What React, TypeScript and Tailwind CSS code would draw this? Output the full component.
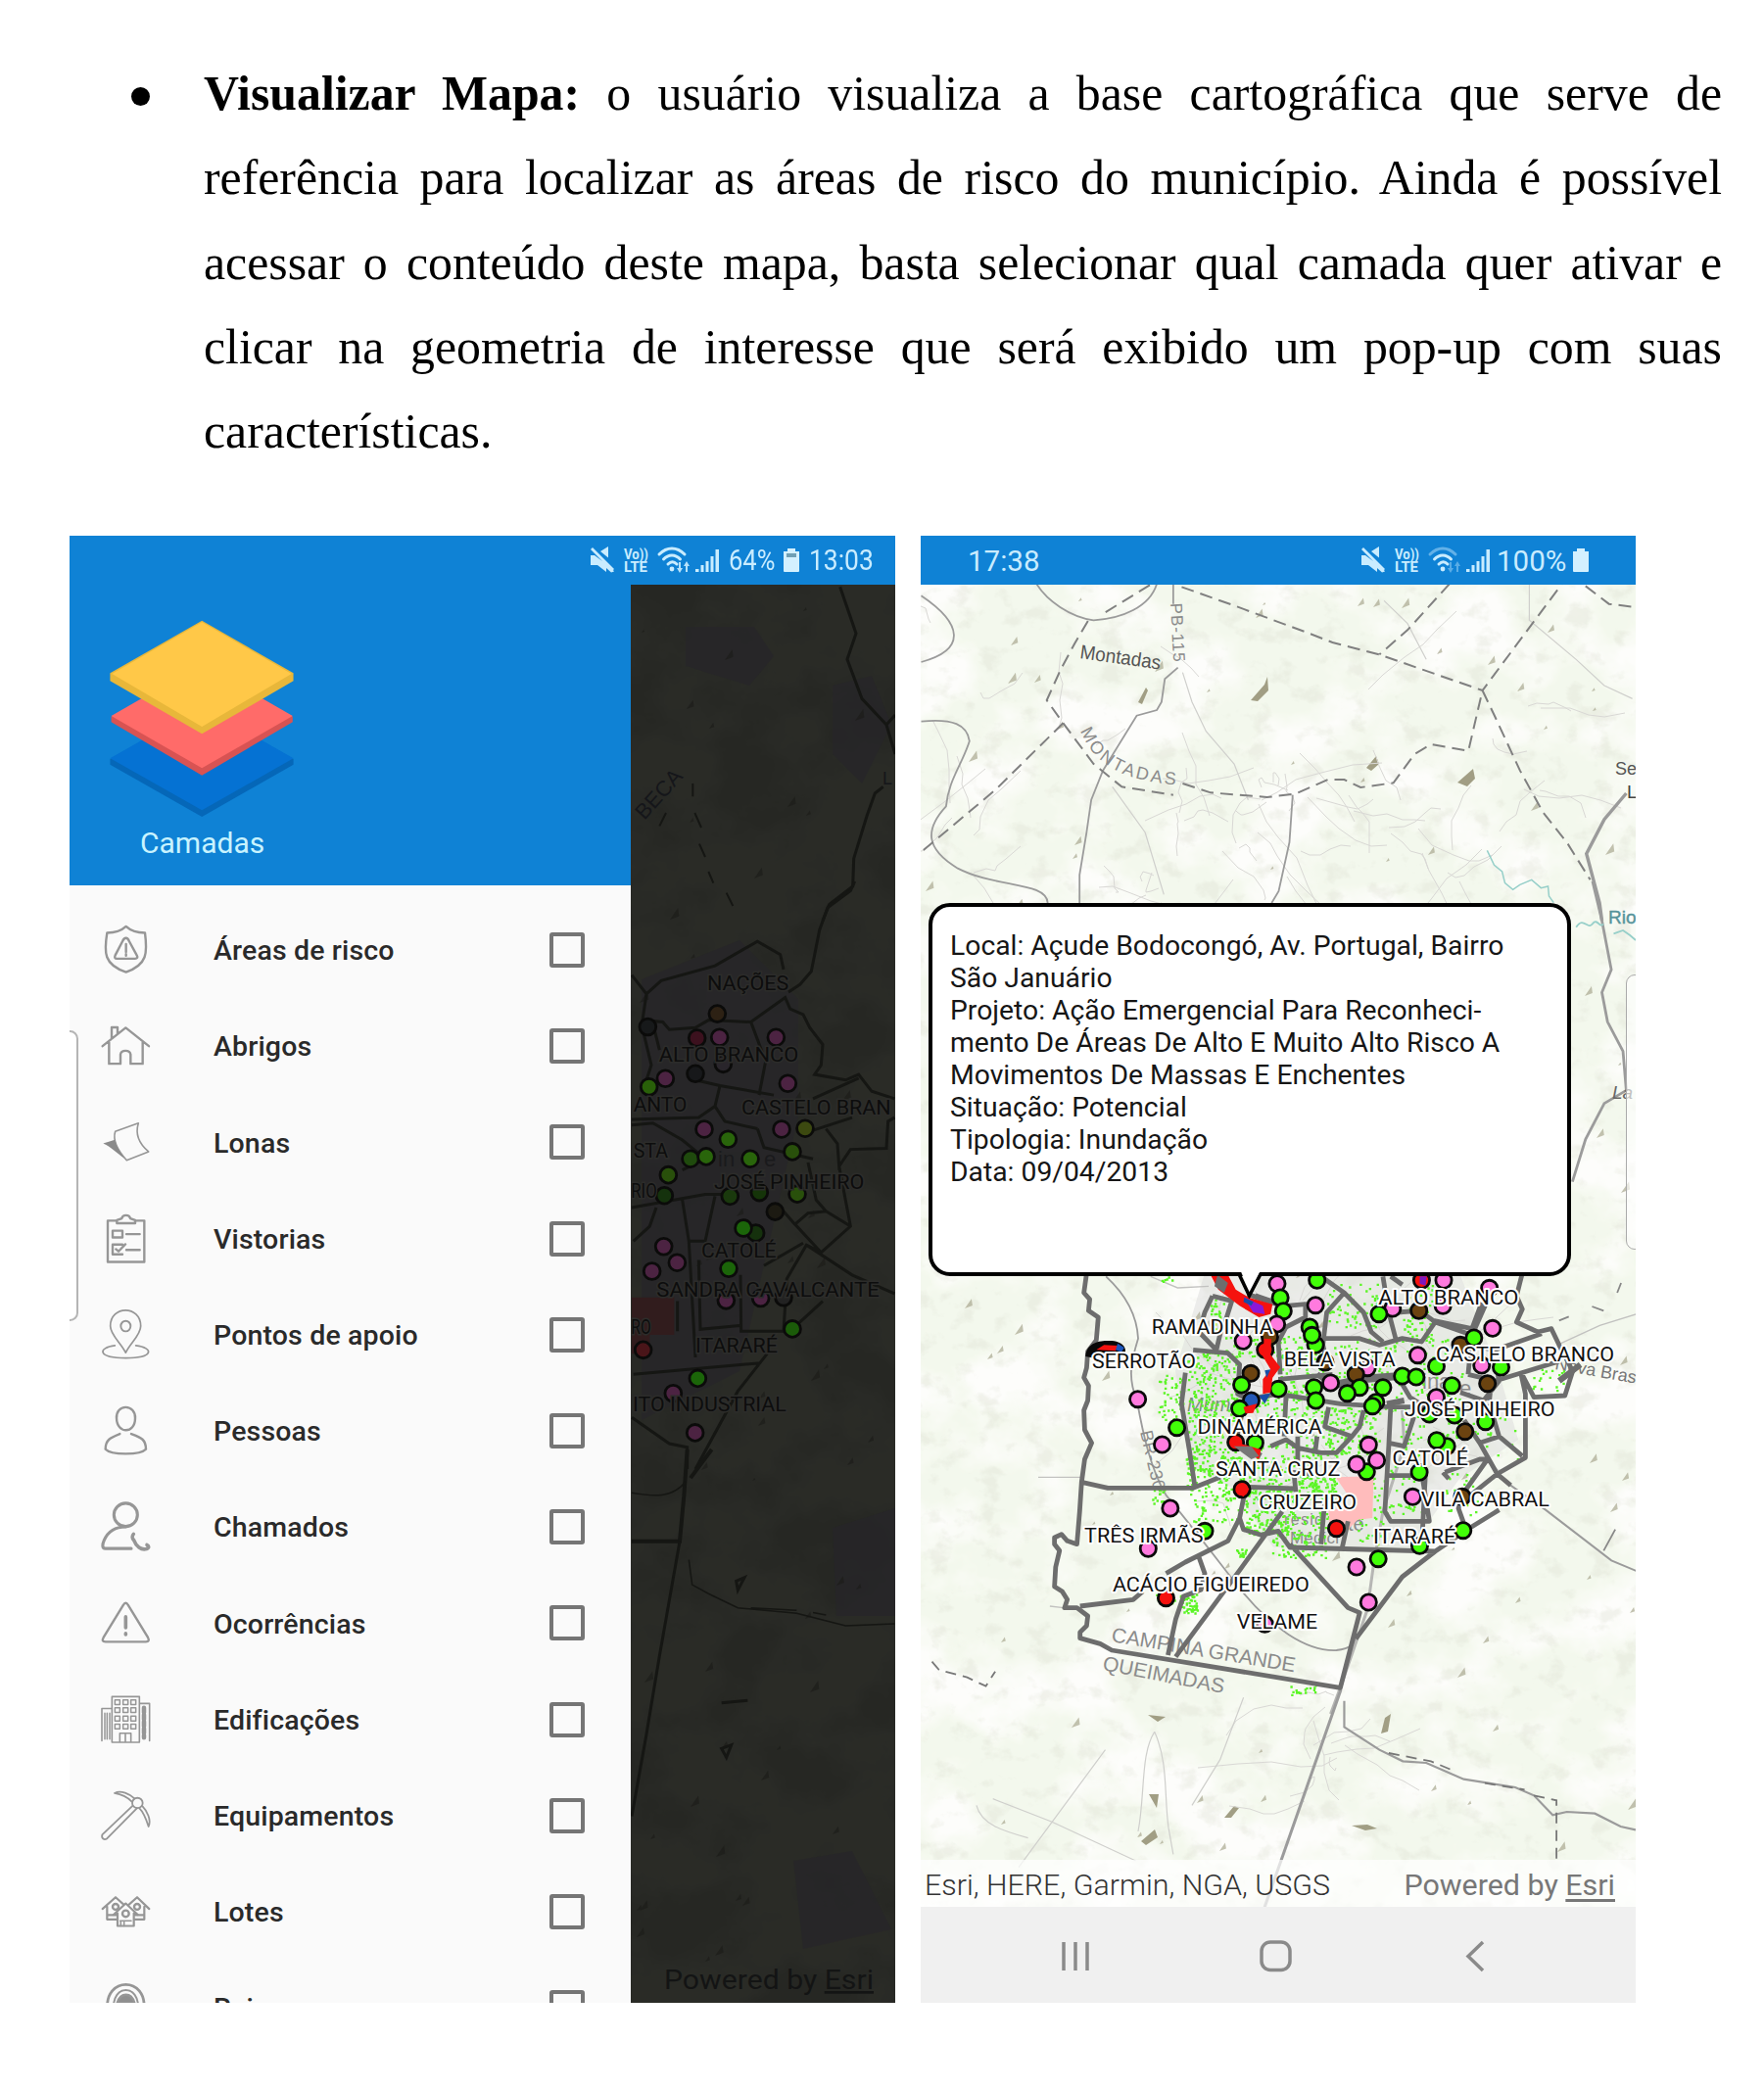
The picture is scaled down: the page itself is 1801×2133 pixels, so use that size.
import React from "react";

const ROBOTO = "font-[Roboto,'Liberation_Sans',sans-serif]";

/* ---------- Paragraph ---------- */

const lines = [
  <><b>Visualizar Mapa:</b> o usuário visualiza a base cartográfica que serve de</>,
  <>referência para localizar as áreas de risco do município. Ainda é possível</>,
  <>acessar o conteúdo deste mapa, basta selecionar qual camada quer ativar e</>,
  <>clicar na geometria de interesse que será exibido um pop-up com suas</>,
];

function Paragraph() {
  return (
    <div className="flex h-[547px] pt-[53px] font-['Liberation_Serif',serif] text-[49.8px] leading-[86.3px] text-black">
      <div className="flex h-[86px] w-[208px] items-center pl-[134px] pt-[5px]">
        <span className="size-[19px] rounded-full bg-black" />
      </div>
      <div className="w-[1550px]">
        {lines.map((l, i) => (
          <p key={i} className="whitespace-nowrap [text-align-last:justify]">{l}</p>
        ))}
        <p>características.</p>
      </div>
    </div>
  );
}

/* ---------- Status bar ---------- */

function StatusIcons({ dim }: { dim?: boolean }) {
  return (
    <svg className="h-[50px] w-[136px] text-[#c9ecff]" viewBox="0 0 136 50" fill="currentColor">
      <path d="M3 20h4L25 33.500l2 3-3 1-5-4.500v4L10 30H3zM13 16l8-5v11.500zM5 12l22 22-2 2L3 14z" />
      <text x="37" y="24" fontSize="14" fontWeight="700" textLength="25" lengthAdjust="spacingAndGlyphs">Vo))</text>
      <text x="37" y="37" fontSize="14" fontWeight="700" textLength="24" lengthAdjust="spacingAndGlyphs">LTE</text>
      <g fill="none" stroke="currentColor" strokeWidth="3" strokeLinecap="round">
        <path d="M73 19c8-8 18-8 26 0" opacity={dim ? 0.45 : 1} />
        <path d="M77.500 24c5-5.500 12-5.500 17 0M82 29c3-3 6-3 9 0" />
      </g>
      <circle cx="86" cy="34" r="2.4" />
      <path d="M91 33h2v-6h2v6h2l-3 5zM98 31l3-5 3 5h-2v6h-2v-6z" opacity={dim ? 0.4 : 0.9} />
      <path d="M110 34h3.500v3H110zM115.500 30h3v7h-3zM120.500 26h3v11h-3zM125.500 21h3v16h-3zM130.500 14h3.500v23h-3.500z" />
    </svg>
  );
}

function Battery({ low }: { low?: boolean }) {
  return (
    <svg className="h-[26px] w-[18px]" viewBox="0 0 18 26">
      <path d="M5 1h8v3h4v20a1 1 0 0 1-1 1H2a1 1 0 0 1-1-1V4h4z" fill="#d3f0ff" />
      {low && <path d="M4 6h10v4H4z" fill="#6f9fb4" />}
    </svg>
  );
}

/* ---------- Drawer icons ---------- */

const upper = "translate(60 900) scale(.33333 .38267)";
const lower = "translate(60 1480) scale(.33333 .36996)";

const houses = "M134 1268L174 1236L214 1268M148 1262V1297H180M200 1268L240 1236L277 1268M262 1262V1297H232M150 1285H176M234 1285H262";

const layers: { name: string; icon: React.ReactNode; t: string }[] = [
  { name: "Áreas de risco", t: upper, icon: <>
    <path d="M206 120C190 133 165 137 148 137C138 190 138 222 206 242C272 222 272 190 264 137C245 137 222 133 206 120Z" />
    <path d="M206 151C201 151 198 154 195 160L173 197C170 203 172 206 178 206H234C240 206 243 203 239 197L216 160C213 154 210 151 206 151ZM206 167V188M206 194V198" /></> },
  { name: "Abrigos", t: upper, icon: <path d="M134 440L205 391L276 440M162 420V390H180V407M154 430V487H189V462C191 449 218 449 220 462V487H257V430" /> },
  { name: "Lonas", t: upper, icon: <><path d="M173 668L244 646C232 680 250 704 275 722L208 745C180 718 165 690 173 668Z" strokeWidth="1.6" /><path d="M136 700L172 690C178 712 192 728 202 740C178 727 162 710 136 700Z" fill="#8a8a8a" stroke="none" /></> },
  { name: "Vistorias", t: upper, icon: <path d="M178 904H150V1014H262V904H234M178 911V903L193 898C196 887 216 887 219 898L234 903V911ZM165 931H195V949H165ZM207 940H248M195 968H165V994H195M175 980L183 986L204 967M207 982H248" /> },
  { name: "Pontos de apoio", t: upper, icon: <><path d="M205 1257C190 1230 158 1210 158 1186C158 1130 251 1130 251 1186C251 1210 220 1230 205 1257ZM172 1238C118 1244 118 1271 205 1271C292 1271 292 1244 236 1238" strokeWidth="1.7" /><ellipse cx="205" cy="1186" rx="15" ry="14" strokeWidth="1.9" /></> },
  { name: "Pessoas", t: upper, icon: <><path d="M205 1403C188 1403 176 1415 177 1432C178 1475 234 1475 234 1432C235 1415 222 1403 205 1403ZM187 1474C158 1484 143 1490 143 1515C160 1531 250 1531 267 1515C267 1490 254 1484 222 1474" /></> },
  { name: "Chamados", t: lower, icon: <><ellipse cx="205" cy="181" rx="36" ry="32" strokeWidth="3.1" /><path d="M222 274H143C132 274 133 263 139 251C151 226 174 214 205 214" strokeWidth="3.1" /><path d="M229 234C224 239 224 246 230 251C237 268 252 279 269 275C278 272 276 266 270 264" strokeWidth="3.6" /></> },
  { name: "Ocorrências", t: lower, icon: <><path d="M198 430C202 423 208 423 212 430L273 520C278 528 275 532 267 532H143C134 532 132 528 137 520Z" /><path d="M205 463V493M205 509V512" strokeWidth="3.6" /></> },
  { name: "Edificações", t: lower, icon: <><path d="M163 807V681H247V807ZM163 714H132V803M247 700H278V803M187 807V782H221V807M204 785V807" strokeWidth="1.6" /><path d="M172 690h15v13h-15zM197 690h15v13h-15zM221 690h15v13h-15zM172 712h15v13h-15zM197 712h15v13h-15zM221 712h15v13h-15zM172 735h15v13h-15zM197 735h15v13h-15zM221 735h15v13h-15zM172 757h15v13h-15zM197 757h15v13h-15zM221 757h15v13h-15zM141 727V798M148 727V798M156 727V798" strokeWidth="1.5" /><path d="M261 712V794" strokeWidth="4.500" strokeDasharray="5 2" /></> },
  { name: "Equipamentos", t: lower, icon: <><path d="M226 983L133 1063C130 1073 139 1079 148 1073L240 989M171 948C190 938 218 951 232 963M171 948C192 951 210 959 223 971M256 984C271 998 284 1022 275 1040C268 1021 260 1001 247 990" strokeWidth="1.8" /><ellipse cx="241" cy="975" rx="16" ry="14" strokeWidth="1.8" /></> },
  { name: "Lotes", t: lower, icon: <><path d={houses} strokeWidth="2.2" /><ellipse cx="174" cy="1262" rx="9" ry="8" /><ellipse cx="240" cy="1262" rx="9" ry="8" /><path d="M168 1284L205 1253L242 1284L230 1280V1315H180V1280Z" fill="#fafafa" strokeWidth="2.2" /><ellipse cx="205" cy="1281" rx="10" ry="9" /><path d="M188 1301H222M190 1301V1315M200 1301V1315" strokeWidth="1.6" /></> },
  { name: "Raios", t: lower, icon: <><path d="M149 1545C141 1455 270 1455 261 1545" strokeWidth="2.8" /><path d="M168 1545C163 1475 248 1475 243 1545" strokeWidth="2" /><path d="M179 1528C190 1498 222 1498 232 1528Z" fill="#8f8f8f" /></> },
];

function DrawerRow({ index, name, t, icon }: { index: number; name: string; t: string; icon: React.ReactNode }) {
  return (
    <div className="flex h-[98.2px] items-center">
      <svg className="ml-[30px] h-[64px] w-[56px]" viewBox={`101 ${938 + index * 98.2} 56 64`} fill="none" stroke="#969696" strokeWidth="2.4" strokeLinejoin="round" strokeLinecap="round">
        <g transform={t} className="[&_*]:[vector-effect:non-scaling-stroke]">{icon}</g>
      </svg>
      <span className="ml-[61px] grow pt-[3px] text-[28.5px] font-medium tracking-[.15px] text-[#2a2a2a]">{name}</span>
      <span className="mr-[47px] size-[36px] rounded-[3px] border-4 border-[#757575]" />
    </div>
  );
}

function Drawer() {
  return (
    <div className="relative h-[1448px] w-[573px] overflow-hidden bg-[#fafafa]">
      <div className="h-[307px] bg-[#0f82d5]">
        <svg className="ml-[37px] h-[245px] w-[200px]" viewBox="108 597 200 245">
          <g transform="translate(60 540) scale(.38267 .33333)">
            <path d="M137 705L382 545L626 705V722L382 882L137 722Z" fill="#0567b8" />
            <path d="M137 703L382 543L626 703L382 862Z" fill="#0572d3" />
            <path d="M140 575L382 415L624 575V592L382 755L140 592Z" fill="#d85353" />
            <path d="M140 573L382 413L624 573L382 733Z" fill="#ff6b69" />
            <path d="M137 442L382 281L626 442V466L382 628L137 466Z" fill="#e8b73a" />
            <path d="M142 444L382 286L621 444L382 606Z" fill="#ffc848" />
          </g>
        </svg>
        <p className="-mt-[1px] ml-[72px] text-[30px] leading-[40px] text-[#c8f3ff]">Camadas</p>
      </div>
      <div className="pt-[17px]">
        {layers.map((l, i) => <DrawerRow key={l.name} index={i} {...l} />)}
      </div>
      <div className="absolute -left-2 top-[455px] h-[297px] w-[17px] rounded-[10px] border-2 border-[#b5b5b5] bg-white" />
    </div>
  );
}

/* ---------- Map helpers ---------- */

const rng = (seed: number) => () => (seed = (seed * 16807) % 2147483647) / 2147483647;

function scatter(zones: number[][], seed: number) {
  const r = rng(seed);
  let d = "";
  for (const [x0, y0, x1, y1, n] of zones)
    for (let i = 0; i < n; i++) {
      const x = x0 + r() * (x1 - x0), y = y0 + r() * (y1 - y0);
      d += `M${x.toFixed(0)} ${y.toFixed(0)}h6v7h-6z`;
    }
  return d;
}

function smudges(x0: number, y0: number, w: number, h: number, n: number, seed: number) {
  const r = rng(seed);
  let d = "";
  for (let i = 0; i < n; i++) {
    const x = x0 + r() * w, y = y0 + r() * h, l = 3 + r() * 9;
    d += `M${x.toFixed(0)} ${y.toFixed(0)}l${(l * 0.7).toFixed(1)} ${(-l).toFixed(1)}l1 ${(l * 0.7).toFixed(1)}z`;
  }
  return d;
}

function streets(x0: number, y0: number, w: number, h: number, n: number, seed: number) {
  const r = rng(seed);
  let d = "";
  for (let i = 0; i < n; i++) {
    d += `M${(x0 + r() * w).toFixed(0)} ${(y0 + r() * h).toFixed(0)}`;
    let dx = r() * 30 - 15, dy = r() * 30 - 15;
    for (let k = 0; k < 5; k++) {
      dx += r() * 16 - 8; dy += r() * 16 - 8;
      d += `l${dx.toFixed(0)} ${dy.toFixed(0)}`;
    }
  }
  return d;
}

/* ---------- Dimmed map behind the drawer ---------- */

// [x, y, fill]
const darkPins: [number, number, string][] = [
  [307, 353, "#2d2114"], [245, 418, "#3c111e"], [314, 416, "#4c2342"], [487, 416, "#4c2342"], [325, 487, "#29252b"], [240, 513, "#17181a"],
  [148, 526, "#4c2342"], [98, 548, "#296009"], [523, 539, "#4c2342"], [94, 388, "#17191a"], [267, 661, "#4c2342"], [504, 661, "#4c2342"],
  [576, 659, "#3c4910"], [340, 688, "#29650b"], [225, 740, "#1f4a0d"], [273, 734, "#29650b"], [408, 740, "#29650b"], [537, 721, "#29500b"],
  [157, 783, "#29500b"], [145, 838, "#15320d"], [346, 840, "#1a390d"], [436, 830, "#153409"], [552, 834, "#29500b"], [484, 881, "#1c1a12"],
  [425, 938, "#15310d"], [387, 925, "#1b6509"], [143, 974, "#4c2342"], [184, 1017, "#4c2342"], [107, 1040, "#4c2342"], [342, 1033, "#1b6509"],
  [334, 1118, "#4c2342"], [440, 1112, "#4c2342"], [510, 1110, "#222"], [537, 1194, "#1b5b09"], [80, 1250, "#4a1519"], [247, 1326, "#1b6509"],
  [172, 1366, "#4c2342"], [239, 1471, "#4c2342"],
];
const darkLabels: [string, number, number, number][] = [
  ["NAÇÕES", 276, 290, 250], ["ALTO BRANCO", 128, 482, 428], ["ANTO", 50, 613, 164], ["CASTELO BRAN", 381, 621, 458],
  ["STA", 50, 738, 106], ["JOSÉ PINHEIRO", 297, 820, 460], ["RIO", 43, 844, 79], ["CATOLÉ", 258, 1004, 230],
  ["SANDRA CAVALCANTE", 121, 1107, 682], ["RO", 43, 1208, 61], ["ITARARÉ", 240, 1257, 252], ["ITO INDUSTRIAL", 48, 1413, 470],
];

function DimmedMap() {
  return (
    <svg className="h-[1448px] w-[270px] bg-[#262723]" viewBox="644 597 270 1448">
      <rect x="644" y="597" width="270" height="1448" filter="url(#terrain)" opacity=".015" />
      <path d="M700 640h70l20 30-25 30-65-20zM850 700l40-10 20 50-30 60-30-30zM655 1000l100-40 60 60 0 120-60 260-100 50zM850 1560l64-20v110l-60 0zM810 1900l60-10 40 80-90 20z" fill="#26252a" opacity=".7" />
      <path d={smudges(650, 620, 250, 1400, 50, 91)} fill="#1a1b17" opacity=".6" />
      <g fill="none" stroke="#151613" strokeWidth="3" className="[&_*]:[vector-effect:non-scaling-stroke]">
        <g transform="translate(630 540) scale(.33333)">
          <path d="M683 178L732 320L705 400L750 520L825 600L852 690M825 600L852 570M815 790L790 810L765 880L725 1010L722 1095L650 1150L630 1200" />
          <path d="M232 780V820M238 870L258 915M252 965L270 1005M280 1050L295 1085M335 1115L355 1155M150 870L130 910" strokeWidth="2" />
        </g>
        <g transform="translate(630 900) scale(.33333 .38267)">
          <path d="M45 1110H175V1210H100V1260H45Z" fill="#311c1d" stroke="none" />
          <path d="M728 0L715 25L645 70L620 130L595 240L560 275L525 295" />
          <path d="M45 250L90 300L135 265L300 225L430 160L500 195L510 235M90 300L78 370L140 375L160 395L240 390L280 370L410 375L515 310L530 340L570 355L590 390L630 435L625 490L605 515L700 530L740 515L780 560L850 580M740 525L600 580M410 375L455 480L435 570M80 400L105 490L90 530M110 380L130 450M240 530L315 545L480 570M315 545L300 600L250 630L45 635M300 600L330 640L430 660M430 660L450 710L600 740M45 650L110 645L200 690L270 740L200 770M640 660L675 700L680 760L715 715L825 712L830 640L850 630M580 670L720 630M680 760L715 920L625 990L545 915L585 885L640 880L715 920M585 750L610 850L640 880M545 915L500 870M625 990L580 970L520 1060L510 1200L380 1200L378 1050M580 970L720 1050L850 1100M460 1260L370 1360L240 1568M530 1200L630 1120M450 1025L570 965M45 870L270 835L345 835M200 850L220 960H270L300 840M120 870L100 920L50 960M220 960L240 1270M250 1010L255 1195L375 1185M50 1315L440 1285M185 1120V1200M45 1430L160 1500L215 1510V1568" />
        </g>
        <g transform="translate(630 1480) scale(.33333 .36351)">
          <path d="M290 0L225 80M215 0L205 130L192 258H45" strokeWidth="4" />
          <path d="M192 258L130 580L90 800L45 1030" strokeWidth="3" />
          <path d="M45 122C110 132 170 138 210 90M220 310L230 380L280 405L370 445L550 460L700 495L850 490M410 445L550 452M600 458L640 465" strokeWidth="1.5" />
          <path d="M320 712L400 705M320 840L350 830L335 865ZM365 370L390 360L370 395Z" />
        </g>
      </g>
      {darkPins.map(([x, y, c], i) => (
        <circle key={i} cx={630 + x / 3} cy={900 + y * 0.38267} r="8.4" fill={c} stroke="#0b0b0a" strokeWidth="2.8" />
      ))}
      <g fill="#0d0d0d" fontSize="20" stroke="#2c2c2a" strokeWidth="3" paintOrder="stroke">
        {darkLabels.map(([s, x, y, w]) => (
          <text key={s} x={630 + x / 3} y={900 + y * 0.38267} textLength={w / 3} lengthAdjust="spacingAndGlyphs">{s}</text>
        ))}
      </g>
      <g fill="#15161a" fontFamily="Liberation Sans">
        <text transform="translate(658 838) rotate(-48)" fontSize="22" textLength="60">BECA</text>
        <text x="901" y="801" fontSize="18">L</text>
        <text x="733" y="1191" fontSize="22" fill="#1a1a1c">in</text>
        <text x="780" y="1191" fontSize="22" fill="#1a1a1c">e</text>
      </g>
      <text x="678" y="2031" fontSize="27" fill="#131414" textLength="214" lengthAdjust="spacingAndGlyphs">
        Powered by <tspan textDecoration="underline">Esri</tspan>
      </text>
    </svg>
  );
}

/* ---------- City map ---------- */

const P = "#ff7ade", G = "#42ff08", B = "#6b4310", R = "#f5120f";
const pins: [number, number, string][] = [
  [617, 62, P], [720, 52, G], [625, 105, G], [716, 128, P], [633, 146, G], [616, 186, P], [701, 195, G], [716, 250, G], [707, 220, G],
  [990, 52, R], [1047, 52, P], [1165, 76, P], [1045, 130, P], [983, 145, B], [915, 138, P], [880, 155, G], [1173, 199, P],
  [1090, 250, B], [1125, 228, G], [980, 281, P], [529, 238, P], [586, 265, R], [598, 225, B], [1145, 312, P], [1195, 318, G], [1028, 315, G],
  [741, 303, B], [850, 320, P], [820, 340, B], [549, 337, B], [525, 372, G], [755, 366, P], [620, 385, G], [712, 380, G], [717, 420, G],
  [830, 380, G], [798, 398, G], [890, 380, G], [872, 425, G], [863, 437, G], [940, 345, G], [976, 348, G], [1068, 374, G], [1160, 368, B], [1028, 410, P],
  [1075, 465, G], [1010, 462, G], [1155, 485, G], [1102, 515, B], [257, 416, P], [358, 503, G], [320, 555, P], [550, 420, "#2559b7"],
  [520, 445, G], [560, 550, G], [510, 548, R], [1055, 560, G], [1029, 542, G], [853, 556, P], [848, 638, G], [874, 603, P], [822, 615, P],
  [984, 640, G], [967, 715, P], [1095, 715, B], [526, 692, R], [341, 750, P], [430, 820, G], [284, 874, P], [1097, 818, G], [985, 865, G],
  [770, 812, R], [878, 905, G], [822, 930, P], [853, 1038, P], [330, 1025, R], [585, 1105, P],
];
const labels: [string, number, number, number][] = [
  ["ALTO BRANCO", 878, 125, 362], ["RAMADINHA", 293, 217, 313], ["SERROTÃO", 139, 321, 268], ["BELA VISTA", 634, 314, 288],
  ["CASTELO BRANCO", 1027, 299, 460], ["JOSÉ PINHEIRO", 946, 467, 388], ["DINAMÉRICA", 411, 521, 322], ["CATOLÉ", 914, 619, 196],
  ["SANTA CRUZ", 458, 650, 322], ["CRUZEIRO", 570, 753, 252], ["VILA CABRAL", 988, 743, 332], ["TRÊS IRMÃS", 119, 856, 307],
  ["ITARARÉ", 865, 857, 213], ["ACÁCIO FIGUEIREDO", 192, 1004, 508], ["VELAME", 513, 1118, 208],
];
const greenZones = [
  [385, 265, 515, 640, 330], [310, 340, 375, 480, 45], [480, 215, 640, 290, 60], [560, 360, 740, 640, 170], [620, 220, 740, 400, 90],
  [740, 60, 880, 200, 60], [740, 440, 880, 590, 140], [370, 590, 660, 700, 190], [530, 690, 660, 830, 170], [600, 760, 750, 900, 110],
  [670, 640, 768, 720, 130], [290, 680, 330, 740, 15], [390, 700, 515, 790, 50], [760, 230, 1100, 450, 170], [940, 60, 1020, 230, 50],
  [900, 600, 1000, 770, 45], [1040, 640, 1150, 770, 25], [1260, 320, 1360, 390, 18], [365, 1010, 410, 1070, 50], [510, 870, 540, 900, 15],
  [650, 1290, 715, 1320, 16], [930, 450, 1100, 600, 60], [820, 650, 900, 870, 55], [310, 40, 350, 55, 6], [440, 110, 480, 200, 20],
  [300, 995, 350, 1040, 20], [1120, 430, 1240, 620, 20],
];

function CityMap() {
  return (
    <svg className="absolute inset-0 h-[1350px] w-[730px]" viewBox="940 597 730 1350">
      <defs>
        <filter id="terrain" x="0" y="0" width="100%" height="100%">
          <feTurbulence type="fractalNoise" baseFrequency=".011 .013" numOctaves="5" seed="7" />
          <feColorMatrix values="0 0 0 0 .9  0 0 0 0 .94  0 0 0 0 .845  4 0 0 0 -1.2" />
        </filter>
        <filter id="relief" x="0" y="0" width="100%" height="100%">
          <feTurbulence type="fractalNoise" baseFrequency=".04 .05" numOctaves="4" seed="23" />
          <feColorMatrix values="0 0 0 0 .72  0 0 0 0 .74  0 0 0 0 .64  5 0 0 0 -2.8" />
        </filter>
        <path id="arc" d="M1103 746C1118 783 1150 799 1212 802" />
      </defs>
      <rect x="940" y="597" width="730" height="1350" fill="#fdfdfb" />
      <rect x="940" y="597" width="730" height="1350" filter="url(#terrain)" />
      <rect x="940" y="597" width="730" height="1350" filter="url(#relief)" opacity=".35" />
      <path d="M1230 1300H1490L1530 1400L1550 1470L1490 1510L1440 1580H1300L1260 1520L1220 1500L1200 1400Z" fill="#dcdcdc" opacity=".5" />
      <path d={smudges(945, 605, 720, 1290, 110, 17)} fill="#aaa890" opacity=".7" />
      <path d="M1277 715l14-16 3-8 1 14-11 11zM1162 717l8-15 2 3-6 14zM1488 799l16-14 2 10-8 8zM1395 784l10-12 3 8-8 7zM1165 1880l14-12 3 8-12 8zM1173 1832l8 14 2-14zM1380 1864l16-1 10 4-12 2zM1172 1751l18 2-8 5zM1250 1856l10-12 5 2-8 10zM1410 1770l4-16 6-4-3 18z" fill="#a19e84" />
      <g fill="none" stroke="#d9d8d5" strokeWidth="1">
        <path d={streets(970, 790, 640, 130, 45, 55)} />
        <path d={streets(1230, 1310, 300, 250, 40, 43)} />
        <path d={streets(1330, 1730, 50, 110, 12, 77)} />
        <path d={streets(950, 620, 680, 200, 12, 31)} />
      </g>

      <g fill="none" stroke="#9b9b9b" strokeWidth="1.8" className="[&_*]:[vector-effect:non-scaling-stroke]">
        <g transform="translate(930 540) scale(.47832 .33333)">
          <path d="M268 168C290 220 340 270 390 280C450 275 510 240 525 168M560 168V230M570 425L542 460L535 530L525 555L482 572L410 740L385 830L375 930L360 1060V1146M22 205C110 290 120 370 22 408M22 590C90 580 120 600 125 650C110 720 80 770 75 850C30 920 30 980 100 1040C180 1100 290 1080 292 1146M815 815L808 960L785 1110L770 1146" />
          <path d="M1527 810L1480 890L1442 995L1470 1146L1475 1200" strokeWidth="3.4" />
          <path d="M580 440L600 530L630 620L690 720L720 830M1010 220L1060 290L1100 400M1320 170V280L1420 400L1480 480L1540 520M430 790L500 930L540 1120" stroke="#cfcfcc" strokeWidth="1.2" />
          <path d="M1230 985L1245 1030L1262 1050L1268 1085L1285 1105L1300 1090L1325 1075L1345 1100L1360 1095L1362 1125L1372 1145" stroke="#96cfc9" strokeWidth="1.5" />
          <g stroke="#808080" strokeDasharray="13 7" strokeWidth="2">
            <path d="M578 178L690 235L850 320L900 348L1000 385L1220 495L1390 168M1220 495L1245 570L1300 740L1350 870L1400 960L1450 1075M1150 168L1060 310L1000 385M510 172L410 260M378 282L350 350L320 430L290 525L325 595L390 720L450 790L560 815M325 595L180 800L22 990M580 780L640 808L760 822L820 812L890 768H925L960 792L1030 778L1075 690L1110 660L1190 680L1220 495M1440 175L1490 230L1547 240" />
          </g>
        </g>
        <g transform="translate(930 900) scale(.47832 .33333)">
          <path d="M1455 0L1475 120L1495 270L1475 340L1487 430L1520 520L1527 640L1480 680L1440 790L1412 920" strokeWidth="2.8" />
          <path d="M1420 140C1435 105 1445 150 1455 130S1470 145 1478 130M1500 160L1520 150L1535 165L1547 180" stroke="#96cfc9" />
        </g>
        <g transform="translate(1060 1290) scale(.39541 .33333)">
          <path d="M175 40C230 100 255 160 258 230C240 300 230 350 255 420C270 520 290 630 330 710C400 810 470 920 530 1010C600 1110 690 1190 770 1185C810 1180 820 1160 820 1150" />
          <path d="M1190 655L1310 755L1480 910L1550 945" strokeWidth="2" />
          <path d="M940 450L945 560L890 760L865 930L850 1060L780 1300L755 1380" strokeWidth="3" stroke="#b6b6b4" />
          <path d="M290 40L360 75L440 70M0 655H110M30 1050L65 1055M1340 250L1450 190L1545 155" stroke="#c2c2c0" strokeWidth="1.4" />
          <path d="M1345 175L1370 163M1430 132L1460 145M1495 90L1505 60M1460 880L1490 815" stroke="#888" />
        </g>
        <g transform="translate(930 1700) scale(.47832 .33333)">
          <path d="M918 75L790 600L755 742" strokeWidth="3" />
          <path d="M925 110V190L1000 260L1050 295L1100 300L1180 350L1290 375L1330 400L1370 460L1400 450L1460 455L1515 495L1547 505" strokeWidth="2.2" />
          <path d="M415 260L230 620M175 410L300 480L480 600M140 430C150 490 200 510 250 530M520 205C490 270 500 400 485 510M520 205C550 300 540 400 550 500L560 580M710 100L660 290L600 430" stroke="#cfcfcc" strokeWidth="1.2" />
          <path d="M1020 270L1110 295L1160 325M1225 362L1310 382M1330 400L1378 415V600M45 -10L60 15L120 38L160 65L180 20" stroke="#777" strokeDasharray="11 7" />
        </g>
      </g>

      <g fill="#8b8b8b" fontFamily="Liberation Sans">
        <text transform="translate(1102 672) rotate(8)" fontSize="20" fill="#555" textLength="83" lengthAdjust="spacingAndGlyphs">Montadas</text>
        <text transform="translate(1195 616) rotate(87)" fontSize="17" textLength="60">PB-115</text>
        <text fontSize="18" letterSpacing="2.6"><textPath href="#arc">MONTADAS</textPath></text>
        <text x="1649" y="791" fontSize="18" fill="#555">Se</text>
        <text x="1661" y="815" fontSize="19" fill="#444">L</text>
        <text x="1642" y="943" fontSize="19" fill="#57949b" stroke="#57949b" strokeWidth=".4">Rio</text>
        <text x="1646" y="1122" fontSize="19" fontStyle="italic" fill="#666">La</text>
        <text transform="translate(1164 1462) rotate(77)" fontSize="18" textLength="62">BR-230</text>
        <text transform="translate(1587 1398) rotate(10)" fontSize="18" fill="#777" textLength="84">Nova Bras</text>
        <text x="1212" y="1441" fontSize="20" fontStyle="italic" fill="#789278">Mum</text>
        <text x="1452" y="1418" fontSize="22">ina</text>
        <text x="1490" y="1425" fontSize="22">e</text>
        <text x="1311" y="1557" fontSize="16" textLength="40">resid</text>
        <text x="1317" y="1576" fontSize="17" textLength="50">Médici</text>
        <text x="1376" y="1563" fontSize="20">te</text>
        <text transform="translate(1134 1676) rotate(9.500)" fontSize="21" textLength="190">CAMPINA GRANDE</text>
        <text transform="translate(1125 1705) rotate(11)" fontSize="21" textLength="126">QUEIMADAS</text>
      </g>

      <g transform="translate(1060 1290) scale(.39541 .33333)" fill="none" stroke="#6d6d6d" strokeWidth="4.8" strokeLinejoin="round" className="[&_*]:[vector-effect:non-scaling-stroke]">
        <path d={scatter(greenZones, 1234)} fill="#5cf526" stroke="none" />
        <path d="M768 655L866 652L863 780L825 785L800 815L752 800L750 755L820 745Z" fill="#ffbcbc" stroke="none" />
        <path d="M125 30L118 90L133 110L130 145L155 165L150 235L128 270L125 320L118 350L130 375L128 420L118 450L120 510L138 550L120 600L112 670L107 760L100 860L75 850L60 830L42 840L42 860L55 880L45 930L42 990L62 1005L75 1030L68 1055L100 1055L128 1080L125 1110L108 1130V1148L160 1165L190 1185L780 1300L830 1070L800 1055L650 860M112 670L180 688L400 688L470 655M380 335L370 430L390 570L405 688M108 1050L245 1030L270 1005M330 950L380 915L490 850L520 780L530 720L545 685L660 690M415 900L430 950L420 1000L375 1020L355 1090L335 1200M355 1205L520 940L630 760M520 780L530 815L575 832L620 820L650 870L1025 882L940 960L820 1150M1025 882L1115 810L1190 755" />
        <path d="M450 100L430 150L415 210L460 265L475 190M450 100L500 115L480 190M400 265L490 275L520 310L515 400L540 415M540 95L640 130L690 125L690 165L640 195L620 240L625 340M730 40L790 90L745 150L735 250L745 300M790 90L840 150L860 210L890 240M740 230H830L880 250L940 230L990 240L1025 180L1120 220M890 40L905 150L925 240M910 40L940 65M1145 120L1120 200L1020 175L985 145L925 150M1165 100L1120 220L1110 340M620 355L760 340M740 385L830 360L930 350L960 410L1000 440L910 440L780 430L620 400L540 415L510 450M820 370L800 430M910 440L905 560L895 760L910 790H1010L990 640M750 440L740 500L810 530L770 580H730L670 565L640 540L600 560M840 450L830 500L810 530M670 530V620M720 530L715 580M640 400L635 530M970 470L945 560L905 550M1000 640L990 870M905 650H990M1050 640L1140 600L1160 600L1100 700L1085 750L1100 800M740 650L660 640L665 700M740 730L730 860M800 790L785 870M1250 30L1235 100L1250 140L1235 180L1290 210L1325 200L1345 250L1380 330L1360 405L1280 410L1245 330M1300 215L1180 265L1110 250M1110 340L1180 360L1345 300M1180 300L1190 360L1150 420L1090 395M1170 360L1165 420M1245 330L1258 400V595L1185 645L1140 550L1190 530L1250 590M1165 430L1190 530M1100 480L1140 550M1185 645L1220 680M1185 645L1085 740M1045 640L1060 660" />
        <path d="M1345 360L1400 310M720 340L760 370L840 350L960 340M900 430L945 420M560 100L620 125M500 540L575 590M530 430L510 540" strokeWidth="6" />
      </g>

      {pins.map(([x, y, c], i) => (
        <circle key={i} cx={1060 + x * 0.39541} cy={1290 + y / 3} r="8.1" fill={c} stroke="#0a0a0a" strokeWidth="2.8" />
      ))}

      <g transform="translate(1060 1290) scale(.39541 .33333)" fill={R}>
        <path d="M122 285C125 235 170 236 190 237C225 240 230 270 222 275H150L145 290Z" fill="#080808" />
        <path d="M150 265L170 250L205 252L200 268Z" />
        <path d="M205 245L222 258L215 272L200 265Z" fill="#1b55bb" />
        <path d="M445 35H490L510 80L545 105L605 125L600 155L570 165L520 130L465 80Z" />
        <path d="M463 35L490 60L480 90L455 70Z" fill="#6d6d6d" />
        <path d="M530 103L580 130L585 155L555 150Z" fill="#8a18d8" />
        <path d="M532 105L556 118L550 130L530 118Z" fill="#174da8" />
        <path d="M583 230L602 232L600 280L625 318L605 350L600 395L580 400V355L600 325L580 285Z" />
        <path d="M585 328L600 325L590 350ZM570 405L600 398L585 430Z" fill="#174da8" />
        <path d="M530 440L565 430L555 458L535 460ZM505 540L530 555L575 570L570 600L545 585L510 560ZM520 675L545 690L530 715L510 700ZM320 1010L345 1020L330 1045L315 1030ZM755 805L775 800V825Z" />
        <path d="M505 560L550 560L570 590L550 600Z" fill="#777" />
        <path d="M985 40H1003L1000 68L985 62Z" fill="#7b18bd" />
      </g>

      <g fill="#111" fontSize="21" stroke="#fff" strokeWidth="4" strokeLinejoin="round" paintOrder="stroke">
        {labels.map(([s, x, y, w]) => (
          <text key={s} x={1060 + x * 0.39541} y={1290 + y / 3} textLength={w * 0.39541} lengthAdjust="spacingAndGlyphs">{s}</text>
        ))}
      </g>
    </svg>
  );
}

/* ---------- Popup ---------- */

const popup = [
  "Local: Açude Bodocongó, Av. Portugal, Bairro",
  "São Januário",
  "Projeto: Ação Emergencial Para Reconheci-",
  "mento De Áreas De Alto E Muito Alto Risco A",
  "Movimentos De Massas E Enchentes",
  "Situação: Potencial",
  "Tipologia: Inundação",
  "Data: 09/04/2013",
];

function Popup() {
  return (
    <div className="absolute left-[8px] top-[325px] h-[381px] w-[656px] rounded-[22px] border-4 border-black bg-white pl-[18px] pt-[23px]">
      {popup.map((l) => (
        <p key={l} className="whitespace-nowrap text-[28.3px] leading-[33.05px] text-[#161616]">{l}</p>
      ))}
      <svg className="absolute left-[309px] top-[370px] h-[30px] w-[34px]" viewBox="0 0 34 30">
        <path d="M5 0L15 24L27 0Z" fill="#fff" />
        <path d="M0 5H4L14.500 27L26 5H34" fill="none" stroke="#000" strokeWidth="3.500" />
      </svg>
    </div>
  );
}

function PhoneDrawer() {
  return (
    <section className="h-[1498px] w-[843px] overflow-hidden">
      <div className="flex h-[50px] items-center bg-[#0f82d5] pl-[529px] text-[29px] text-[#c9ecff]">
        <StatusIcons />
        <span className="ml-[8px] w-[55px] origin-left scale-x-[.88] pt-[2px]">64%</span>
        <Battery low />
        <span className="ml-[9px] w-[74px] origin-left scale-x-[.91] pt-[2px]">13:03</span>
      </div>
      <div className="flex">
        <Drawer />
        <DimmedMap />
      </div>
    </section>
  );
}

function PhoneMap() {
  return (
    <section className="flex h-[1498px] w-[730px] flex-col overflow-hidden">
      <div className="flex h-[50px] items-center bg-[#0f82d5] text-[29.5px] text-[#c9ecff]">
        <span className="ml-[48px] w-[399px] pt-[2px]">17:38</span>
        <StatusIcons dim />
        <span className="ml-[5px] w-[77px] pt-[2px]">100%</span>
        <Battery />
      </div>
      <div className="relative h-[1350px]">
        <CityMap />
        <Popup />
        <div className="absolute -right-2 top-[398px] h-[281px] w-[18px] rounded-[10px] border border-[#aaa] bg-white/60" />
        <div className="absolute inset-x-0 bottom-0 flex h-[48px] items-center justify-between bg-white/70 pl-[4px] pr-[21px] pt-[4px] text-[30.4px]">
          <span className="font-light text-[#333]">Esri, HERE, Garmin, NGA, USGS</span>
          <span className="text-[#777]">Powered by <u className="underline-offset-4">Esri</u></span>
        </div>
      </div>
      <div className="h-[98px] bg-[#f0f0f0]">
        <svg className="h-[98px] w-[730px]" viewBox="940 1947 730 98" fill="none" stroke="#8a8a8a" strokeWidth="3.5">
          <path d="M1086 1983V2012M1098 1983V2012M1110 1983V2012M1514 1983L1499 1997.500L1514 2012" />
          <rect x="1288" y="1983" width="29" height="28.500" rx="9" />
        </svg>
      </div>
    </section>
  );
}

export default function App() {
  return (
    <main className="h-[2133px] w-[1801px] overflow-hidden bg-white">
      <Paragraph />
      <div className={`flex gap-[26px] pl-[71px] ${ROBOTO}`}>
        <PhoneDrawer />
        <PhoneMap />
      </div>
    </main>
  );
}
